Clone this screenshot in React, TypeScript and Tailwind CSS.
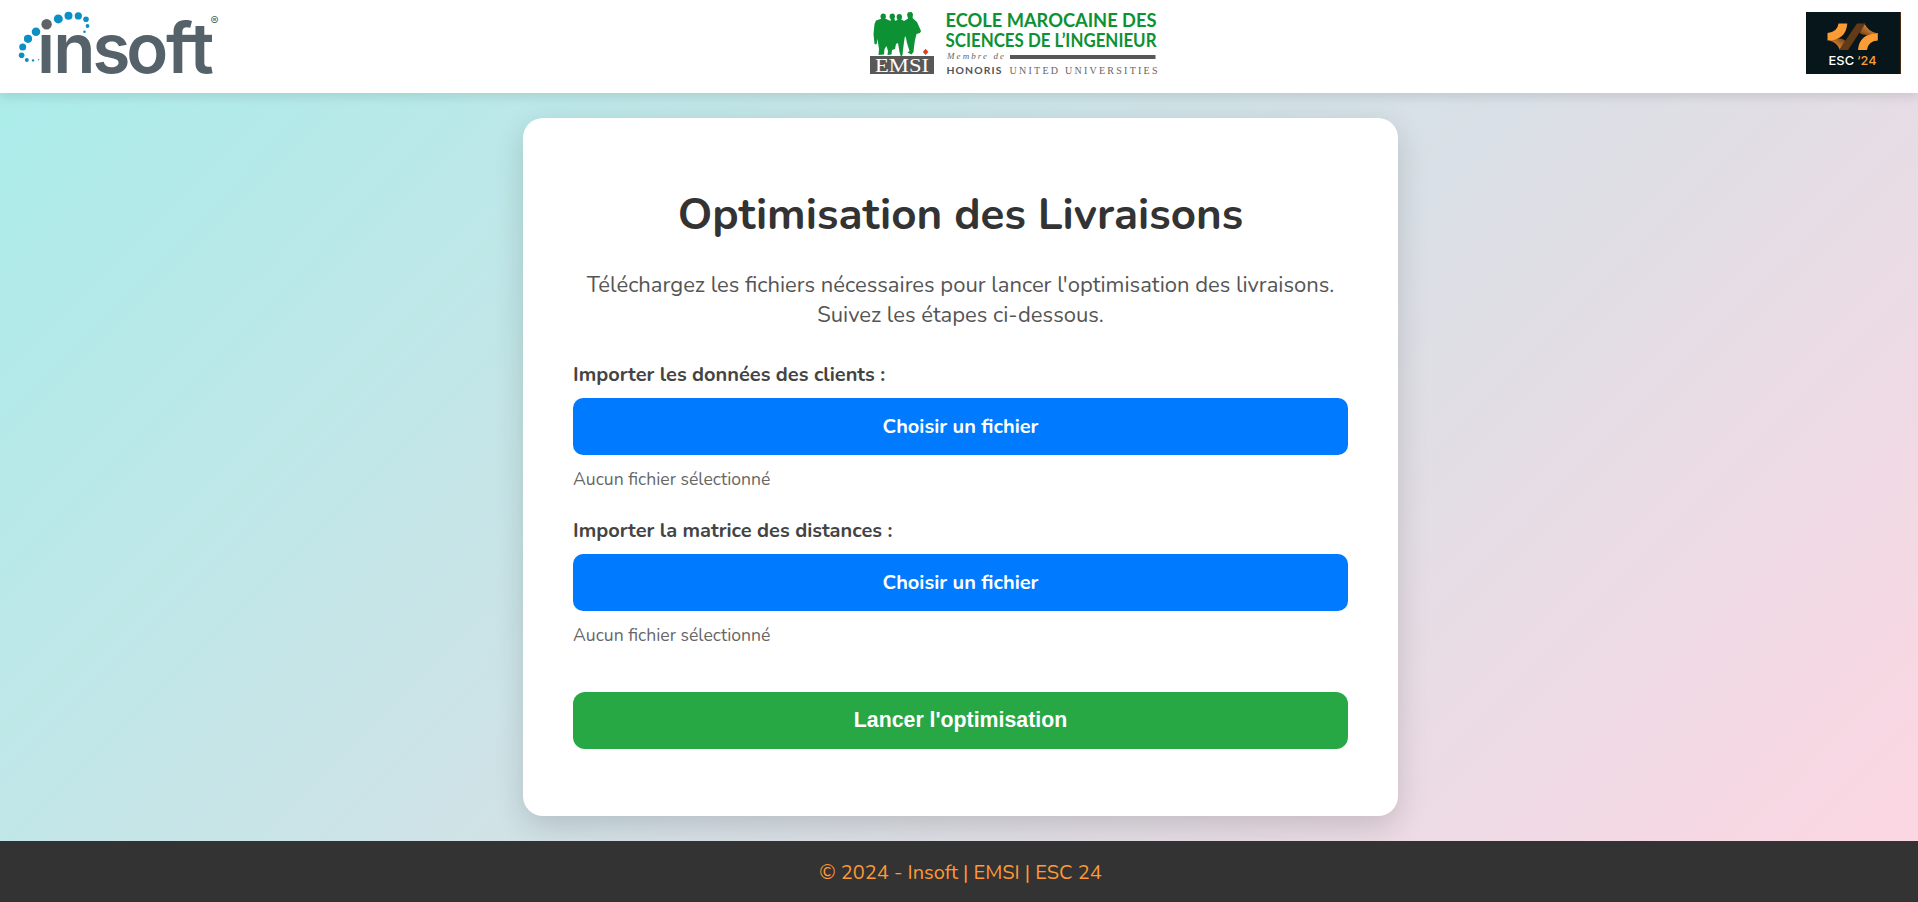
function InsoftLogo() {
  const dots: [number, number, number][] = [
    [36, 31.7, 4.3],
    [28, 38.8, 4.1],
    [22.7, 47, 3.5],
    [21.6, 55.2, 2.8],
    [26.8, 60, 2],
    [33, 60.4, 1.2],
    [38.6, 59.7, 0.7],
    [58.3, 18.9, 4.5],
    [68.5, 15.8, 4],
    [78.3, 15.9, 3.6],
    [86, 19.3, 2.8],
    [87.5, 26, 1.9],
    [84.5, 31.7, 1.3],
  ];
  return (
    <svg className="h-[93px] w-[240px] shrink-0" viewBox="0 0 240 93" role="img" aria-label="insoft">
      <text
        y="72.6"
        x="37 53.2 92.4 126.2 166 189.6"
        className="fill-[#55626a] font-[Inter,'Liberation_Sans',sans-serif] text-[69px] font-semibold"
      >
        insoft
      </text>
      <rect x="167" y="34.8" width="45" height="7.2" fill="#55626a" />
      <circle cx="46.6" cy="24.2" r="6.6" fill="white" />
      <circle cx="46.6" cy="24.2" r="5.2" fill="#5d6368" />
      {dots.map(([x, y, r]) => (
        <circle key={`${x}-${y}`} cx={x} cy={y} r={r} fill="#0a90c5" />
      ))}
      <text x="210.4" y="25.4" className="fill-[#55626a] font-[Inter,sans-serif] text-[12px]">
        ®
      </text>
    </svg>
  );
}

function EmsiLogo() {
  return (
    <svg className="h-[93px] w-[292px] shrink-0" viewBox="869 0 292 93" role="img" aria-label="EMSI">
      <g fill="#0d9135">
        <ellipse cx="883.2" cy="16.5" rx="2.7" ry="3" />
        <ellipse cx="892.3" cy="16.5" rx="2.7" ry="3" />
        <ellipse cx="899.3" cy="17" rx="2.7" ry="3" />
        <path d="M907 14.5 908 12.3 911.5 12 913 14 912.5 18.5 910 20 908 18.5Z" />
        <path d="M882 18.5H885L890.5 21 891 18.5H894L895.5 21 898.5 19H900.500L904 21 909 18H912.500L917 22 921 31 920 33 916.500 34 915 40 914 47 913.500 52 911.500 54.500 907.500 52.500 909.500 51 907 43 906 38 905 36 904 42 903 50 902.500 55 901 57 899.500 52 898 43 896 44 895 49 892 50 891.500 54.500 887.500 55 888 51 886.500 46 884.500 49 884 54.500 878.500 55 879 49 877.500 39 876.500 44.500 874.500 44 873.500 34 874.500 24 876 20.500Z" />
      </g>
      <rect x="870" y="56" width="64" height="18" fill="#585858" />
      <text
        x="875"
        y="71.6"
        textLength="54"
        lengthAdjust="spacingAndGlyphs"
        className="fill-white font-['Liberation_Serif',serif] text-[19.5px]"
      >
        EMSI
      </text>
      <path d="m925.6 48.8 2.8 3.1-2.8 3.1-2.8-3.1z" fill="#d9421e" />
      <g className="fill-[#0d9135] font-[Lato,sans-serif] text-[18.3px] font-bold">
        <text x="945.5" y="27" textLength="211" lengthAdjust="spacingAndGlyphs">
          ECOLE MAROCAINE DES
        </text>
        <text x="945.5" y="47" textLength="211" lengthAdjust="spacingAndGlyphs">
          SCIENCES DE L’INGENIEUR
        </text>
      </g>
      <text
        x="947"
        y="59"
        textLength="57"
        className="fill-[#666] font-['Liberation_Serif',serif] text-[9px] italic"
      >
        Membre de
      </text>
      <rect x="1010" y="55" width="145.5" height="4" fill="#585858" />
      <text
        x="946.5"
        y="73.5"
        textLength="56"
        lengthAdjust="spacingAndGlyphs"
        className="fill-[#555] font-[Lato,sans-serif] text-[9.5px] font-bold tracking-[1px]"
      >
        HONORIS
      </text>
      <text
        x="1009.5"
        y="73.5"
        textLength="148"
        className="fill-[#666] font-['Liberation_Serif',serif] text-[10px]"
      >
        UNITED UNIVERSITIES
      </text>
    </svg>
  );
}

function EscLogo() {
  return (
    <svg className="h-[62px] w-[95px] shrink-0" viewBox="1806 12 95 62" role="img" aria-label="ESC '24">
      <defs>
        <linearGradient id="esc-left" x1="0" y1="1" x2="1" y2="0">
          <stop offset="0.3" stopColor="#e08a32" />
          <stop offset="1" stopColor="#6b3a17" />
        </linearGradient>
        <linearGradient id="esc-right" x1="1" y1="0" x2="0" y2="1">
          <stop offset="0.3" stopColor="#e08a32" />
          <stop offset="1" stopColor="#6b3a17" />
        </linearGradient>
      </defs>
      <rect x="1806" y="12" width="95" height="62" fill="#07161a" />
      <rect x="1900" y="12" width="1" height="62" fill="#4a2c14" />
      <path d="M1829 40.5Q1837 42 1840 50L1846 41.500Q1842 36 1829 40.500Z" fill="url(#esc-left)" />
      <path d="M1864.500 23.500Q1868 31 1876 33Q1865 37 1859.500 33Z" fill="url(#esc-right)" />
      <path d="M1838.500 23.500H1847.300Q1846 40.500 1827.500 40.500V33Q1837.500 32 1838.500 23.500Z" fill="#fb9c35" />
      <path d="M1877.800 33V40.500Q1868 41 1867 50H1858Q1859 34 1877.800 33Z" fill="#fb9c35" />
      <path d="M1857 23.500H1865.500L1848 50H1839Z" fill="#623a18" />
      <text
        x="1828.6"
        y="64.800"
        textLength="25.5"
        lengthAdjust="spacingAndGlyphs"
        className="fill-white font-[Inter,sans-serif] text-[12px] font-medium"
      >
        ESC
      </text>
      <text
        x="1857"
        y="64.800"
        textLength="19.5"
        lengthAdjust="spacingAndGlyphs"
        className="fill-[#fb9c35] font-[Inter,sans-serif] text-[12px] font-medium"
      >
        ‘24
      </text>
    </svg>
  );
}

function FileField({ label }: { label: string }) {
  return (
    <div className="flex flex-col">
      <label className="mb-[10px] text-[20px] leading-[27px] font-bold text-[#444]">{label}</label>
      <button className="h-[57px] w-full rounded-[10px] bg-[#007bff] text-[20px] font-bold text-white">
        Choisir un fichier
      </button>
      <p className="mt-3 text-[17.6px] leading-6 text-[#666]">Aucun fichier sélectionné</p>
    </div>
  );
}

export default function App() {
  return (
    <div className="flex h-[902px] flex-col bg-linear-[135deg,#a8edea,#fed6e3] font-[Nunito,Lato,sans-serif]">
      <header className="z-10 flex h-[93px] shrink-0 items-start justify-between bg-white pr-[17px] shadow-[0_4px_10px_rgba(0,0,0,0.1)]">
        <InsoftLogo />
        <div className="flex flex-1 justify-center pr-4">
          <EmsiLogo />
        </div>
        <div className="flex pt-3">
          <EscLogo />
        </div>
      </header>

      <main className="flex flex-1 flex-col items-center pt-[25px] pl-[3px]">
        <section className="flex h-[698px] w-[875px] flex-col rounded-[20px] bg-white px-[50px] pt-[67px] shadow-[0_10px_30px_rgba(0,0,0,0.15)]">
          <h1 className="text-center text-[44px] leading-[60px] font-bold text-[#333]">
            Optimisation des Livraisons
          </h1>
          <p className="mt-[25px] text-center text-[22px] leading-[30px] text-[#555]">
            Téléchargez les fichiers nécessaires pour lancer l'optimisation des livraisons. Suivez les
            étapes ci-dessous.
          </p>
          <div className="mt-[31px] flex flex-col gap-[26px]">
            <FileField label="Importer les données des clients :" />
            <FileField label="Importer la matrice des distances :" />
          </div>
          <button className="mt-[45px] h-[57px] w-full rounded-[12px] bg-[#28a745] font-['Liberation_Sans',Arial,sans-serif] text-[21.3px] font-bold text-white">
            Lancer l'optimisation
          </button>
        </section>
      </main>

      <footer className="z-10 flex h-[61px] shrink-0 items-center justify-center bg-[#333] pt-[3px] pl-[3px] text-[20px] text-[#ff9933]">
        © 2024 - Insoft | EMSI | ESC 24
      </footer>
    </div>
  );
}
